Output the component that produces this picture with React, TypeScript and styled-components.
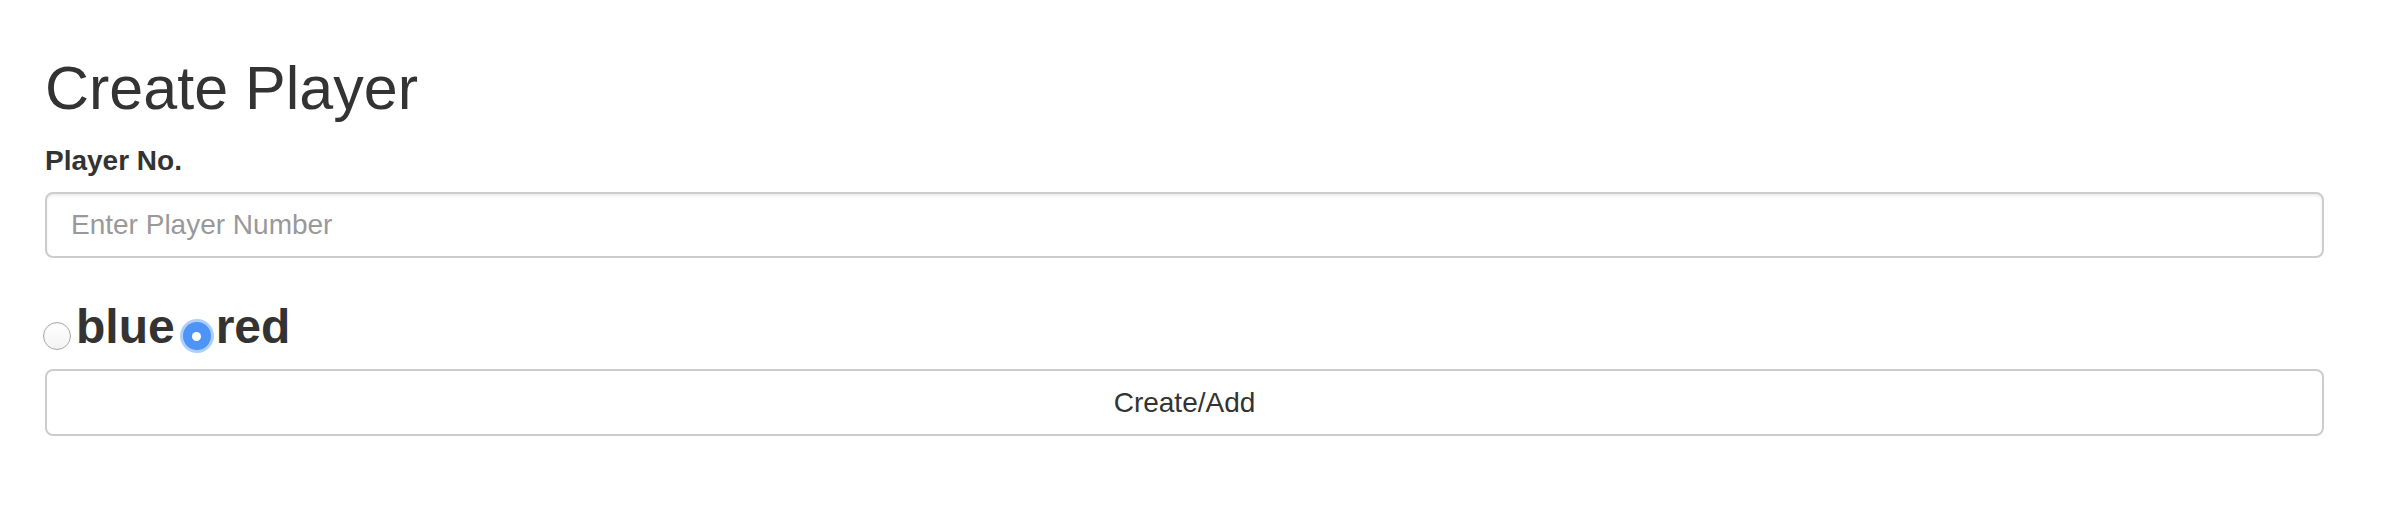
import React, { useState } from "react";
import styled, { createGlobalStyle } from "styled-components";

const TEXT = "#333";
const BORDER = "#ccc";
const BLUE = "#4d94f6";

const GlobalStyle = createGlobalStyle`
  html, body {
    margin: 0;
    padding: 0;
    background: #fff;
  }
  body {
    font-family: "Liberation Sans", Arial, Helvetica, sans-serif;
    color: ${TEXT};
  }
  * {
    box-sizing: border-box;
  }
`;

const Page = styled.div`
  padding: 55px 72px 0 45px;
`;

const Title = styled.h2`
  margin: 0 0 20px;
  font-size: 61px;
  font-weight: 400;
  line-height: 66px;
  color: ${TEXT};
`;

const FieldLabel = styled.label`
  display: block;
  margin-bottom: 11px;
  font-size: 28px;
  font-weight: 700;
  line-height: 40px;
`;

const TextInput = styled.input`
  display: block;
  width: 100%;
  height: 66px;
  padding: 0 24px;
  border: 2px solid ${BORDER};
  border-radius: 8px;
  box-shadow: inset 0 2px 3px rgba(0, 0, 0, 0.075);
  font-family: inherit;
  font-size: 28px;
  color: ${TEXT};
  outline: none;

  &::placeholder {
    color: #999;
  }
`;

const RadioRow = styled.div`
  display: flex;
  align-items: flex-end;
  margin: 42px 0 16px -2px;
  height: 53px;
`;

const RadioOption = styled.label`
  display: flex;
  align-items: flex-end;
  cursor: pointer;
`;

const RadioInput = styled.input<{ $focused?: boolean }>`
  appearance: none;
  -webkit-appearance: none;
  position: relative;
  flex: none;
  width: 28px;
  height: 28px;
  margin: 0 5px 3px ${(p) => (p.$focused ? "8px" : "0")};
  border-radius: 50%;
  border: 1px solid #a9a9a9;
  background: linear-gradient(#ffffff, #f3f3f3);
  box-shadow: inset 0 1px 2px rgba(0, 0, 0, 0.06);
  outline: none;

  &:checked {
    border: none;
    background: ${BLUE};
    box-shadow: 0 0 0 3px rgba(77, 148, 246, 0.45);
  }

  &:checked::after {
    content: "";
    position: absolute;
    left: 50%;
    top: 50%;
    width: 9px;
    height: 9px;
    margin: -4.5px 0 0 -4.5px;
    border-radius: 50%;
    background: #fff;
  }
`;

const OptionText = styled.span`
  font-size: 48px;
  font-weight: 700;
  line-height: 53px;
  color: ${TEXT};
`;

const SubmitButton = styled.button`
  display: block;
  width: 100%;
  height: 67px;
  border: 2px solid ${BORDER};
  border-radius: 8px;
  background: #fff;
  font-family: inherit;
  font-size: 28px;
  color: ${TEXT};
  cursor: pointer;
`;

const teams = ["blue", "red"];

export default function App() {
  const [team, setTeam] = useState("red");

  return (
    <>
      <GlobalStyle />
      <Page>
        <Title>Create Player</Title>
        <FieldLabel htmlFor="playerNo">Player No.</FieldLabel>
        <TextInput id="playerNo" type="text" placeholder="Enter Player Number" />
        <RadioRow>
          {teams.map((t) => (
            <RadioOption key={t}>
              <RadioInput
                type="radio"
                name="team"
                value={t}
                checked={team === t}
                $focused={team === t}
                onChange={() => setTeam(t)}
              />
              <OptionText>{t}</OptionText>
            </RadioOption>
          ))}
        </RadioRow>
        <SubmitButton type="button">Create/Add</SubmitButton>
      </Page>
    </>
  );
}
